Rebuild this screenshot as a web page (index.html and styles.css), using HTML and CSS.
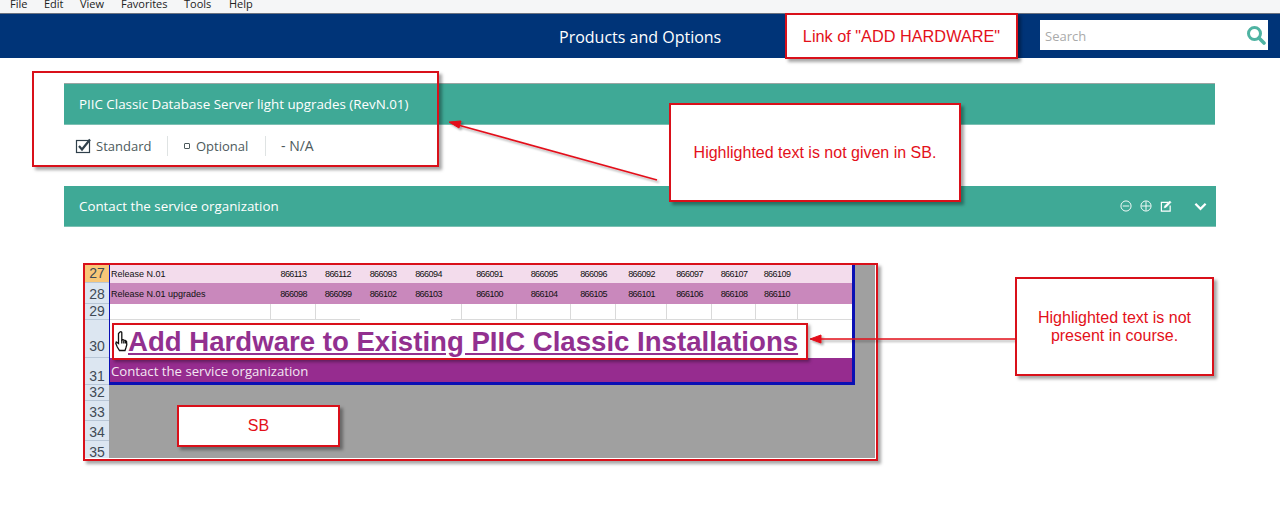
FILE: index.html
```html
<!DOCTYPE html>
<html lang="en">
<head>
  <meta charset="UTF-8">
  <meta name="viewport" content="width=device-width, initial-scale=1.0">
  <title>Products and Options</title>
  <link rel="stylesheet" href="styles.css">
</head>
<body>
  <nav class="menubar">
    <span class="menu-file">File</span>
    <span class="menu-edit">Edit</span>
    <span class="menu-view">View</span>
    <span class="menu-fav">Favorites</span>
    <span class="menu-tools">Tools</span>
    <span>Help</span>
  </nav>

  <header class="topbar">
    <h1>Products and Options</h1>
    <div class="search">
      <span>Search</span>
      <svg width="20" height="20" viewBox="0 0 20 20" fill="none" stroke="#4fb3a2">
        <circle cx="8.500" cy="8.500" r="6" stroke-width="3"/>
        <path d="M13 13l5 5" stroke-width="3.600" stroke-linecap="round"/>
      </svg>
    </div>
  </header>

  <section class="panel first">
    <div class="panel-head">PIIC Classic Database Server light upgrades (RevN.01)</div>
    <div class="legend">
      <span class="legend-item std">
        <svg width="16" height="16" viewBox="0 0 16 16" fill="none" stroke="#2f3f4a">
          <rect x="1.500" y="2.500" width="13" height="12" stroke-width="1.200"/>
          <path d="M4 8l3 3.500L15 1.500" stroke-width="2.200"/>
        </svg>
        Standard
      </span>
      <span class="legend-item opt"><i class="small-box"></i>Optional</span>
      <span class="legend-item na">- N/A</span>
    </div>
  </section>

  <section class="panel second">
    <div class="panel-head">
      <span>Contact the service organization</span>
      <div class="head-icons">
        <svg width="12" height="12" viewBox="0 0 13 13" fill="none" stroke="#fff">
          <circle cx="6.500" cy="6.500" r="5.500"/><path d="M3 6.500h7"/>
        </svg>
        <svg width="12" height="12" viewBox="0 0 13 13" fill="none" stroke="#fff">
          <circle cx="6.500" cy="6.500" r="5.500"/><path d="M1.500 6.500h10M6.500 1.500v10"/>
        </svg>
        <svg width="12" height="12" viewBox="0 0 13 13" fill="none" stroke="#fff">
          <path d="M9 2.500H1.500v9.500h9.500V6" stroke-width="1.300"/>
          <path d="M4.500 8.500l.5-2L10.500 1l1.500 1.500L6.500 8z" fill="#fff" stroke-width=".6"/>
        </svg>
        <svg class="chevron" width="13" height="9" viewBox="0 0 14 9" fill="none" stroke="#fff">
          <path d="M1.500 1.500L7 7l5.500-5.500" stroke-width="2.400"/>
        </svg>
      </div>
    </div>
  </section>

  <div class="sheet">
    <div class="rownums">
      <div class="rn rn-27 active">27</div>
      <div class="rn rn-28">28</div>
      <div class="rn rn-29">29</div>
      <div class="rn rn-30">30</div>
      <div class="rn rn-31">31</div>
      <div class="rn rn-32">32</div>
      <div class="rn rn-33">33</div>
      <div class="rn rn-34">34</div>
      <div class="rn rn-35">35</div>
    </div>
    <div class="table-area">
      <div class="row rn-27 light">
        <span class="label">Release N.01</span>
        <span>866113</span><span>866112</span><span>866093</span><span>866094</span><span></span>
        <span>866091</span><span>866095</span><span>866096</span><span>866092</span><span>866097</span><span>866107</span><span>866109</span>
      </div>
      <div class="row rn-28 dark">
        <span class="label">Release N.01 upgrades</span>
        <span>866098</span><span>866099</span><span>866102</span><span>866103</span><span></span>
        <span>866100</span><span>866104</span><span>866105</span><span>866101</span><span>866106</span><span>866108</span><span>866110</span>
      </div>
      <div class="row rn-29 blank">
        <span></span><span></span><span class="nogrid"></span><span class="patch"></span><span class="patch"></span><span></span>
        <span></span><span></span><span></span><span></span><span></span><span></span><span></span>
      </div>
      <div class="title-row rn-30"></div>
      <div class="contact-row rn-31">Contact the service organization</div>
    </div>
  </div>

  <!-- review notes drawn over the page -->
  <svg class="arrows" width="1280" height="506" viewBox="0 0 1280 506">
    <defs>
      <filter id="soft"><feDropShadow dx="2" dy="2" stdDeviation="1.200" flood-color="#000" flood-opacity=".35"/></filter>
    </defs>
    <g filter="url(#soft)" fill="#e3101a" stroke="#e3101a">
      <path d="M657 180L458 125" stroke-width="1.600"/>
      <path d="M449 122l12-1-2 7z"/>
      <path d="M1022 339H818" stroke-width="1.600"/>
      <path d="M810 339l11-4v8z"/>
    </g>
  </svg>

  <div class="note outline note-upgrade"></div>
  <div class="note outline note-sheet"></div>
  <div class="note note-link">Link of "ADD HARDWARE"</div>
  <div class="note note-given">Highlighted text is not given in SB.</div>
  <div class="note note-present">Highlighted text is not<br>present in course.</div>
  <div class="note note-sb">SB</div>
  <div class="note note-title">
    <svg class="hand" width="13" height="21" viewBox="0 0 13 21" fill="#fff" stroke="#111" stroke-width="1.300">
      <path d="M5 1c.9-.6 1.800-.2 1.800.8V9l1.200-.3 1 .5 1.200.1 1.300 1 .3 3.500-.9 3-.9 2.700H4.500l-2.200-3.500L.8 12.500 1.300 11l2.200 1.500V2.500z" />
      <path d="M6.800 9v3.500M8.800 9.500v3M10.500 10v2.500" />
    </svg>
    <a class="sheet-link">Add Hardware to Existing PIIC Classic Installations</a>
  </div>
</body>
</html>
```

FILE: styles.css
```css
* {
  box-sizing: border-box;
}

html, body {
  margin: 0;
  height: 506px;
  overflow: hidden;
}

body {
  position: relative;
  background: #fff;
  font-family: "Open Sans", "Noto Sans", sans-serif;
  color: #4d5a5c;
}

/* browser menu, cut off by the top of the window */
.menubar {
  height: 13px;
  background: #f5f6f7;
  display: flex;
  padding-left: 10px;
  font-size: 11px;
  line-height: 8px;
  color: #222;
  overflow: hidden;
}

.menubar span {
  margin-right: 20px;
}

.menu-file { width: 14px; }
.menu-edit { width: 16px; }
.menu-view { width: 21px; }
.menu-fav { width: 43px; }
.menu-tools { width: 25px; }

.topbar {
  height: 45px;
  background: #003478;
  border-top: 1px solid #6b7280;
  display: flex;
  align-items: center;
  position: relative;
}

.topbar h1 {
  margin: 2px 0 0 559px;
  font-size: 16px;
  font-weight: 400;
  color: #fff;
}

.search {
  position: absolute;
  left: 1040px;
  top: 6px;
  width: 228px;
  height: 30px;
  background: #fff;
  display: flex;
  align-items: center;
  justify-content: space-between;
  padding: 0 2px 0 5px;
  font-size: 13px;
  color: #aaa;
}

.search span {
  margin-top: 2px;
}

.panel {
  margin-left: 64px;
}

.panel.first {
  width: 1151px;
  margin-top: 25px;
}

.panel.second {
  width: 1152px;
  margin-top: 20px;
}

.panel-head {
  height: 41px;
  background: #3fa996;
  color: #fff;
  font-size: 13.35px;
  padding: 0 9px 0 15px;
  display: flex;
  align-items: center;
  justify-content: space-between;
  border-bottom: 1px solid #7cc0b3;
}

.first .panel-head {
  height: 42px;
  border-top: 1px solid #9aa5a3;
}

.head-icons {
  display: flex;
  align-items: center;
  gap: 8px;
}

.chevron {
  margin-left: 14px;
}

.legend {
  height: 41px;
  display: flex;
  align-items: center;
  font-size: 13px;
}

.legend-item {
  display: flex;
  align-items: center;
  height: 20px;
}

.std {
  padding-left: 11px;
  width: 104px;
  gap: 5px;
  border-right: 1px solid #dfe3e3;
}

.opt {
  padding-left: 16px;
  width: 98px;
  border-right: 1px solid #dfe3e3;
}

.na {
  padding-left: 15px;
  font-size: 14px;
}

.small-box {
  width: 6px;
  height: 6px;
  border: 1px solid #4d5a5c;
  border-radius: 1px;
  margin-right: 6px;
}

/* spreadsheet picture */
.sheet {
  margin: 38px 0 0 85px;
  width: 790px;
  height: 193px;
  background: #a0a0a0;
  display: flex;
  align-items: flex-start;
}

.rownums {
  width: 24px;
  background: #dce6f1;
  color: #3f4a55;
  font-family: "Liberation Sans", Arial, sans-serif;
  font-size: 14px;
  text-align: center;
}

.rn {
  display: flex;
  align-items: flex-end;
  justify-content: center;
  border-bottom: 1px solid #b8c6d6;
  line-height: 15px;
}

.active {
  background: #f8c778;
}

.rn-27 { height: 18px; padding-bottom: 1px; }
.rn-28 { height: 21px; padding-bottom: 1px; }
.rn-29 { height: 16px; }
.rn-30 { height: 38px; padding-bottom: 3px; }
.rn-31 { height: 27px; }
.rn-32 { height: 16px; }
.rn-33 { height: 20px; }
.rn-34 { height: 20px; }
.rn-35 { height: 17px; align-items: flex-start; padding-top: 4px; border-bottom: none; }

.table-area {
  width: 746px;
  border-left: 1px solid #0a10b4;
  border-right: 3px solid #0a10b4;
  border-bottom: 3px solid #0a10b4;
}

.row {
  display: grid;
  grid-template-columns: 161px 45px 44px 46px 45px 11px 55px 54px 45px 51px 45px 44px 42px 55px;
  align-items: center;
  font-family: "Liberation Sans", Arial, sans-serif;
  font-size: 9px;
  letter-spacing: -.55px;
  color: #111;
  text-align: center;
  border-bottom: none;
  padding-bottom: 0;
}

.label {
  font-size: 9px;
  letter-spacing: 0;
  text-align: left;
  padding-left: 1px;
}

.light { background: #f3dcec; }
.dark { background: #c988bc; }

.blank {
  background: #fff;
  align-items: start;
  grid-template-columns: 161px 45px 44px 46px 45px 11px 55px 54px 45px 51px 45px 44px 42px;
  border-bottom: 1px solid #dadada;
}

.blank span {
  height: 15px;
  border-right: 1px solid #dadada;
}

.blank .nogrid {
  border-right: none;
}

/* white strip pasted over the gridlines in the picture */
.blank .patch {
  height: 16px;
  background: #fff;
  border-right: none;
}

.title-row {
  background: #fff;
  padding-bottom: 0;
}

.contact-row {
  height: 24px;
  background: #962c8f;
  color: #f3e6f2;
  font-size: 13.2px;
  line-height: 26px;
  padding-left: 1px;
}

.arrows {
  position: absolute;
  left: 0;
  top: 0;
  z-index: 2;
}

.note {
  position: absolute;
  z-index: 3;
  border: 2px solid #d9101a;
  background: #fff;
  box-shadow: 3px 3px 3px rgba(0, 0, 0, .35);
  color: #e3101a;
  font-family: "Liberation Sans", Arial, sans-serif;
  font-size: 16px;
  display: flex;
  align-items: center;
  justify-content: center;
  text-align: center;
}

.note.outline {
  background: transparent;
  z-index: 1;
}

.note-upgrade { left: 32px; top: 71px; width: 407px; height: 96px; }
.note-sheet { left: 83px; top: 263px; width: 795px; height: 198px; }
.note-link { left: 785px; top: 13px; width: 233px; height: 46px; font-size: 16.3px; }
.note-given { left: 669px; top: 103px; width: 292px; height: 99px; }
.note-present { left: 1015px; top: 277px; width: 199px; height: 99px; line-height: 18px; }
.note-sb { left: 177px; top: 405px; width: 163px; height: 42px; }

.note-title {
  left: 112px;
  top: 323px;
  width: 696px;
  height: 37px;
  justify-content: flex-start;
  padding-left: 1px;
  box-shadow: 2px 2px 3px rgba(0, 0, 0, .35);
}

.hand {
  flex-shrink: 0;
}

.sheet-link {
  font-size: 27.6px;
  font-weight: 700;
  color: #92308f;
  text-decoration: underline;
  white-space: nowrap;
}
```
